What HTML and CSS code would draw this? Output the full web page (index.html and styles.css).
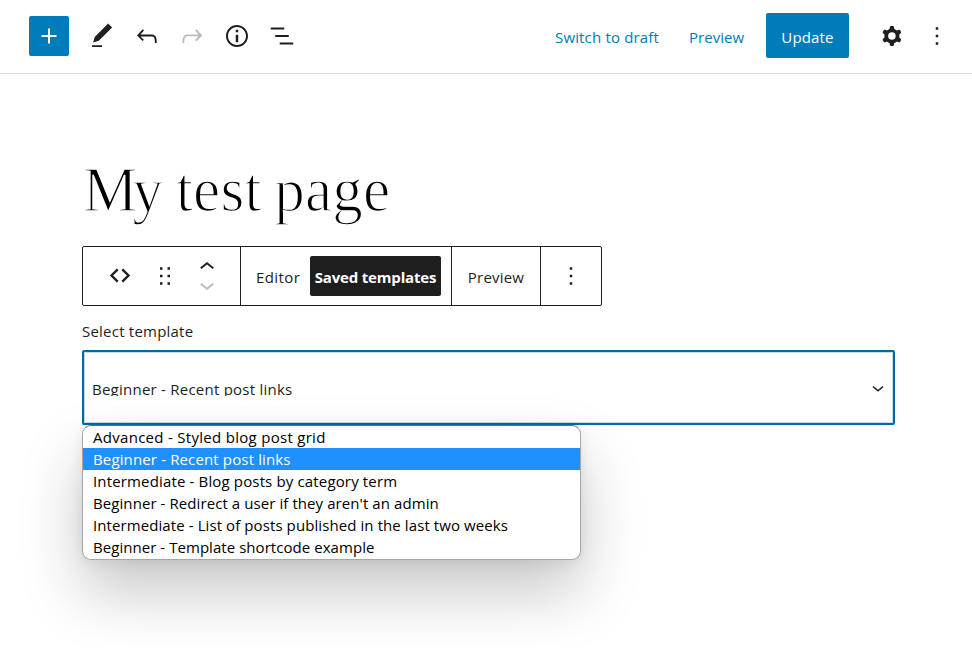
FILE: index.html
```html
<!DOCTYPE html>
<html lang="en">
<head>
<meta charset="utf-8">
<title>Edit Page</title>
<link rel="stylesheet" href="styles.css">
</head>
<body>
<header class="topbar">
  <div class="tools">
    <button class="inserter"><svg class="icon" viewBox="0 0 24 24"><path d="M18 11.2h-5.2V6h-1.6v5.2H6v1.6h5.2V18h1.6v-5.2H18z"/></svg></button>
    <svg class="icon" viewBox="0 0 24 24"><path d="M20.1 5.1L16.9 2 6.2 12.7l-1.3 4.4 4.5-1.3L20.1 5.1zM4 20.8h8v-1.5H4v1.5z"/></svg>
    <svg class="icon" viewBox="0 0 24 24"><path d="M18.3 11.7c-.6-.6-1.4-.9-2.3-.9H6.7l2.9-3.3-1.1-1-4.5 5L8.5 16l1-1-2.7-2.7H16c.5 0 .9.2 1.3.5 1 1 1 3.4 1 4.5v.3h1.5v-.2c0-1.5 0-4.3-1.5-5.7z"/></svg>
    <svg class="icon disabled" viewBox="0 0 24 24"><path d="M15.6 6.5l-1.1 1 2.9 3.3H8c-.9 0-1.7.3-2.3.9-1.4 1.5-1.4 4.2-1.4 5.6v.2h1.5v-.3c0-1.1 0-3.5 1-4.5.3-.3.7-.5 1.3-.5h9.2L14.5 15l1.1 1.1 4.6-4.6-4.6-5z"/></svg>
    <svg class="icon" viewBox="0 0 24 24"><path d="M12 3.2c-4.8 0-8.8 3.9-8.8 8.8 0 4.8 3.9 8.8 8.8 8.8 4.8 0 8.8-3.9 8.8-8.8 0-4.8-4-8.8-8.8-8.8zm0 16c-4 0-7.2-3.3-7.2-7.2C4.8 8 8 4.8 12 4.8s7.2 3.3 7.2 7.2c0 4-3.2 7.2-7.2 7.2zM11 17h2v-6h-2v6zm0-8h2V7h-2v2z"/></svg>
    <svg class="icon" viewBox="0 0 24 24"><path d="M13.8 5.2H3v1.5h10.8V5.2zm-3.6 12v1.5H21v-1.5H10.2zm7.2-6H6.6v1.5h10.8v-1.5z"/></svg>
  </div>
  <div class="actions">
    <a class="link draft">Switch to draft</a>
    <a class="link preview">Preview</a>
    <button class="update">Update</button>
    <svg class="icon gear" viewBox="0 0 24 24"><path fill-rule="evenodd" d="M10.289 4.836A1 1 0 0111.275 4h1.306a1 1 0 01.987.836l.244 1.466c.787.26 1.503.679 2.108 1.218l1.393-.522a1 1 0 011.216.437l.653 1.13a1 1 0 01-.23 1.273l-1.148.944a6.025 6.025 0 010 2.435l1.149.946a1 1 0 01.23 1.272l-.653 1.13a1 1 0 01-1.216.437l-1.394-.522c-.605.54-1.32.958-2.108 1.218l-.244 1.466a1 1 0 01-.987.836h-1.306a1 1 0 01-.986-.836l-.244-1.466a5.995 5.995 0 01-2.108-1.218l-1.394.522a1 1 0 01-1.217-.436l-.653-1.131a1 1 0 01.23-1.272l1.149-.946a6.026 6.026 0 010-2.435l-1.148-.944a1 1 0 01-.23-1.272l.653-1.131a1 1 0 011.217-.437l1.393.522a5.994 5.994 0 012.108-1.218l.244-1.466zM14.929 12a3 3 0 11-6 0 3 3 0 016 0z"/></svg>
    <svg class="icon" viewBox="0 0 24 24"><path d="M13 19h-2v-2h2v2zm0-6h-2v-2h2v2zm0-6h-2V5h2v2z"/></svg>
  </div>
</header>
<main class="canvas">
  <h1 class="title"><span class="cap">M</span>y test page</h1>
  <div class="toolbar">
    <div class="group block-group">
      <svg class="icon" viewBox="0 0 30 30"><path class="line" d="M12.700 8.300L6.500 14.500l6.200 6.200M17.300 8.300l6.200 6.200-6.200 6.200"/></svg>
      <svg class="icon" viewBox="0 0 24 24"><path d="M8 7h2V5H8v2zm0 6h2v-2H8v2zm0 6h2v-2H8v2zm6-14v2h2V5h-2zm0 8h2v-2h-2v2zm0 6h2v-2h-2v2z"/></svg>
      <div class="movers">
        <svg class="icon" viewBox="0 0 24 24"><path d="M6.500 12.400L12 8l5.500 4.400-.9 1.200L12 10l-4.500 3.600-1-1.200z"/></svg>
        <svg class="icon disabled" viewBox="0 0 24 24"><path d="M17.500 11.600L12 16l-5.500-4.400.9-1.200L12 14l4.500-3.600 1 1.200z"/></svg>
      </div>
    </div>
    <div class="group tabs">
      <span class="tab editor">Editor</span>
      <span class="tab active">Saved templates</span>
    </div>
    <div class="group view"><span class="tab">Preview</span></div>
    <div class="group more"><svg class="icon" viewBox="0 0 24 24"><path d="M13 19h-2v-2h2v2zm0-6h-2v-2h2v2zm0-6h-2V5h2v2z"/></svg></div>
  </div>
  <div class="label">Select template</div>
  <div class="select">
    <span class="value">Beginner - Recent post links</span>
    <svg class="caret" viewBox="0 0 12 8"><path class="line" d="M1 1.500L6 5.800l5-4.300"/></svg>
    <ul class="menu">
      <li class="o1">Advanced - Styled blog post grid</li>
      <li class="o2 selected">Beginner - Recent post links</li>
      <li class="o3">Intermediate - Blog posts by category term</li>
      <li class="o4">Beginner - Redirect a user if they aren't an admin</li>
      <li class="o5">Intermediate - List of posts published in the last two weeks</li>
      <li class="o6">Beginner - Template shortcode example</li>
    </ul>
  </div>
</main>
</body>
</html>
```
FILE: styles.css
```css
* { box-sizing: border-box; }
body {
  margin: 0;
  height: 648px;
  overflow: hidden;
  background: #fff;
  color: #1e1e1e;
  font: 400 15px/22px "Open Sans", "Noto Sans", sans-serif;
  white-space: nowrap;
}
button { border: 0; padding: 0; font: inherit; color: #fff; background: #007cba; border-radius: 2px; }
.icon { display: block; width: 30px; height: 30px; fill: currentColor; flex: none; }
.disabled { color: #bbb; }
.line { fill: none; stroke: currentColor; stroke-width: 2.4; }

.topbar {
  display: flex;
  justify-content: space-between;
  height: 74px;
  padding: 0 20px 2px 29px;
  border-bottom: 1px solid #e0e0e0;
}
.tools { display: flex; align-items: center; gap: 15px; }
.inserter { width: 40px; height: 40px; padding: 5px; margin-right: 3px; }
.actions { display: flex; align-items: center; }
.link { color: #007cba; padding-top: 3px; }
.draft { width: 134px; letter-spacing: .16px; }
.preview { width: 77px; letter-spacing: .05px; }
.update { width: 83px; height: 45px; padding-top: 2px; margin-right: 28px; letter-spacing: .15px; }
.gear { margin-right: 15px; }

.canvas { padding: 0 77px 0 82px; }
.title {
  margin: 79px 0 0 1px;
  height: 93px;
  font: 400 64px/74px "Liberation Serif", serif;
  color: #000;
  -webkit-text-stroke: 1.5px #fff;
  letter-spacing: .2px;
  word-spacing: -3px;
  transform: scaleX(.955);
  transform-origin: left;
}
.cap { letter-spacing: -5px; }
.toolbar {
  display: flex;
  width: 520px;
  height: 60px;
  border: 1px solid #1e1e1e;
  border-radius: 2px;
}
.group { display: flex; align-items: center; border-right: 1px solid #1e1e1e; }
.group:last-child { border-right: 0; }
.block-group { width: 158px; padding-left: 22px; gap: 15px; }
.movers { display: flex; flex-direction: column; margin-left: -3px; }
.movers .icon + .icon { margin-top: -12px; }
.tabs { width: 211px; padding-left: 15px; }
.tab { line-height: 40px; padding-top: 1px; height: 40px; letter-spacing: .2px; }
.editor { width: 54px; letter-spacing: .4px; }
.active {
  width: 131px;
  text-align: center;
  color: #fff;
  font-weight: 700;
  letter-spacing: -.18px;
  background: #1e1e1e;
  border-radius: 2px;
}
.view { width: 89px; justify-content: center; }
.more { flex: 1; justify-content: center; }
.label { margin: 14px 0 8px; line-height: 22px; letter-spacing: .22px; }

.select {
  position: relative;
  display: flex;
  align-items: center;
  justify-content: space-between;
  height: 75px;
  padding: 0 9px 0 8px;
  border: 2px solid #006ba1;
  border-radius: 2px;
  box-shadow: inset 0 0 0 1px #c8dbe5;
}
.value { height: 16px; margin-top: 1px; overflow: hidden; line-height: 18px; letter-spacing: .24px; }
.caret { width: 12px; height: 8px; overflow: visible; margin-top: 3px; }
.caret .line { stroke-width: 1.6; }
.menu {
  position: absolute;
  left: -2px;
  top: 73px;
  width: 499px;
  height: 135px;
  margin: 0;
  padding: 0 0 1px;
  list-style: none;
  color: #000;
  background: #fff;
  border: 1px solid #a6a6a6;
  border-top-color: #6b6b6b;
  border-radius: 9px;
  box-shadow: 0 32px 62px rgba(0, 0, 0, .22), 0 2px 14px rgba(0, 0, 0, .08);
}
.menu li { padding-left: 10px; height: 22px; line-height: 22px; }
.menu .selected { color: #fff; background: #1e90ff; }
.o1 { letter-spacing: .29px; }
.o2 { letter-spacing: .14px; }
.o3 { letter-spacing: .15px; }
.o4 { letter-spacing: .08px; }
.o5 { letter-spacing: .09px; }
.o6 { letter-spacing: .05px; }
```
